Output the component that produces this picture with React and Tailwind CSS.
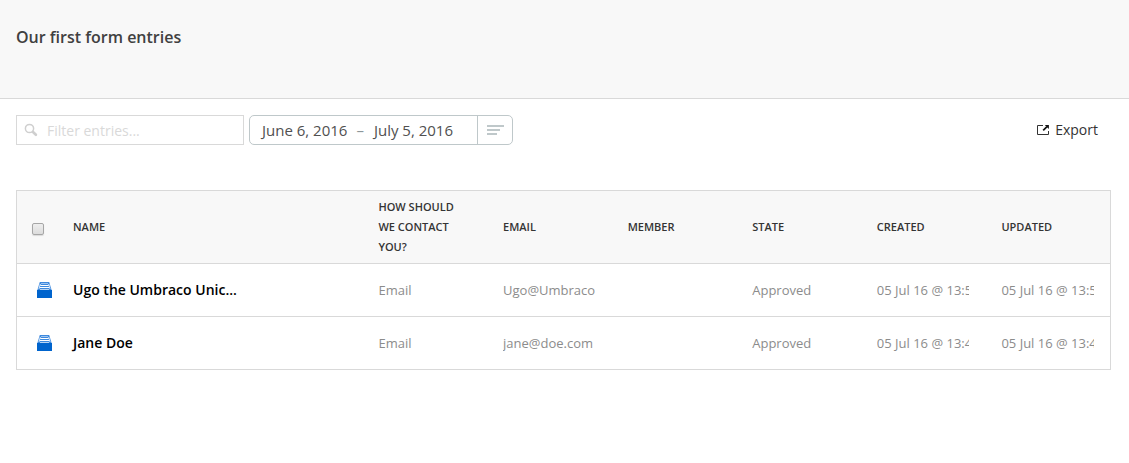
const columns = ["How should we contact you?", "Email", "Member", "State", "Created", "Updated"];

const entries = [
  {
    name: "Ugo the Umbraco Unic...",
    values: ["Email", "Ugo@Umbraco", "", "Approved", "05 Jul 16 @ 13:55", "05 Jul 16 @ 13:55"],
  },
  {
    name: "Jane Doe",
    values: ["Email", "jane@doe.com", "", "Approved", "05 Jul 16 @ 13:44", "05 Jul 16 @ 13:44"],
  },
];

const rowGrid = "grid grid-cols-[40px_minmax(0,1fr)_repeat(6,124.6px)] items-center";

function SearchIcon() {
  return (
    <svg width="14" height="14" viewBox="0 0 14 14" fill="none" stroke="#cfcfcf">
      <circle cx="5.5" cy="5.5" r="4.1" strokeWidth="1.5" />
      <path d="M9 9 L11.9 11.8" strokeWidth="2.6" strokeLinecap="round" />
    </svg>
  );
}

function ExportIcon() {
  return (
    <svg width="14" height="12" viewBox="0 0 14 12" fill="none" stroke="#333">
      <path d="M7 1.5 H1.5 V10.5 H12.5 V7" strokeWidth="1" />
      <path d="M7.2 6.4 L11 2.6" strokeWidth="1.7" stroke="#111" />
      <path d="M8.8 1 H12.9 V5 Z" fill="#111" stroke="none" />
    </svg>
  );
}

function EntryIcon() {
  return (
    <svg className="block" width="15" height="16" viewBox="0 0 15 16">
      <path d="M2.8 0 H12.2 L14.6 8 H0.4 Z" fill="#3d89de" />
      <path d="M4 1 H11 V2 H4 Z" fill="#9cc3ef" />
      <path d="M3.2 3 H11.8 V4 H3.2 Z M2.6 5 H12.4 V6 H2.6 Z" fill="#fff" />
      <path d="M2.8 2 H3.8 L2.4 7 H1.5 Z M12.2 2 H11.2 L12.6 7 H13.5 Z" fill="#dceafa" />
      <path d="M3 7 H12 V8 H3 Z" fill="#b8d5f4" />
      <path d="M0 8 H15 V16 H0 Z" fill="#0064cd" />
    </svg>
  );
}

function Checkbox() {
  return (
    <div
      role="checkbox"
      aria-checked="false"
      className="mt-[4px] ml-[15px] h-[12px] w-[12px] rounded-[2px] border border-[#a6a6a6] bg-linear-to-b from-[#eeeeee] to-[#dcdcdc] shadow-[0_1px_1px_rgba(0,0,0,0.12)]"
    />
  );
}

export default function App() {
  return (
    <div className="h-[463px] w-full overflow-hidden bg-white font-['Open_Sans',sans-serif] antialiased">
      <header className="h-[99px] border-b border-[#d9d9d9] bg-[#f8f8f8] px-4 pt-[25px]">
        <h1 className="text-[16px] leading-6 font-semibold text-[#404040]">Our first form entries</h1>
      </header>

      <div className="flex items-center pt-4 pr-[31px] pl-4">
        <div className="flex h-[30px] w-[228px] items-center border border-[#d9d9d9] pl-[7px]">
          <SearchIcon />
          <span className="ml-[9px] pt-0.5 text-[14px] leading-5 text-[#d9d9d9]">Filter entries...</span>
        </div>
        <div className="ml-[5px] flex h-[30px] w-[264px] rounded-[5px] border border-[#bfc8ca] text-[15px] leading-7 text-[#505050]">
          <div className="flex w-[228px] border-r border-[#bfc8ca] pl-3">
            <span>June 6, 2016</span>
            <span className="mr-[10px] ml-[9px] text-[#8c9699]">–</span>
            <span>July 5, 2016</span>
          </div>
          <svg className="mt-[9px] ml-[9px]" width="18" height="11" viewBox="0 0 18 11" fill="#bfc8ca">
            <path d="M0 0 H17 V2 H0 Z M0 4 H13 V6 H0 Z M0 8 H10 V10 H0 Z" />
          </svg>
        </div>
        <button className="ml-auto flex items-center gap-[5px] text-[14px] leading-5 text-[#333]">
          <ExportIcon />
          <span>Export</span>
        </button>
      </div>

      <section className="mt-[45px] ml-4 w-[1095px] border border-[#d9d9d9]">
        <div className={`${rowGrid} h-[72px] bg-[#f8f8f8] text-[11px] leading-5 font-[560] text-[#343434] uppercase`}>
          <Checkbox />
          <div className="px-4">Name</div>
          {columns.map((label) => (
            <div key={label} className="px-4">{label}</div>
          ))}
        </div>
        {entries.map((entry) => (
          <div key={entry.name} className={`${rowGrid} h-[53px] border-t border-[#d9d9d9] text-[13px] leading-5 text-[#8c8c8c]`}>
            <div className="pl-5"><EntryIcon /></div>
            <div className="px-4 text-[14px] font-semibold text-black">{entry.name}</div>
            {entry.values.map((value, i) => (
              <div key={i} className="px-4">
                <div className="overflow-hidden whitespace-nowrap">{value}</div>
              </div>
            ))}
          </div>
        ))}
      </section>
    </div>
  );
}
